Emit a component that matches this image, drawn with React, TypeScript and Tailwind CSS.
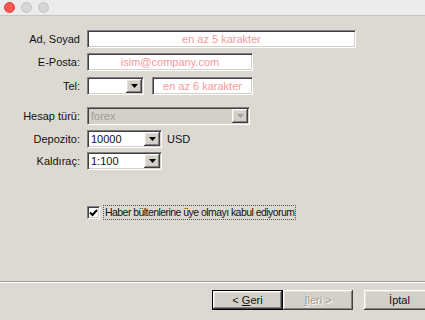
import React from "react";

const sunken =
    "border border-t-[#808080] border-l-[#808080] border-b-white border-r-white shadow-[inset_1px_1px_0_#404040,inset_-1px_-1px_0_#d4d0c8]";
const raised =
    "bg-[#d4d0c8] shadow-[inset_-1px_-1px_0_#404040,inset_1px_1px_0_#ffffff,inset_-2px_-2px_0_#808080,inset_2px_2px_0_#e4e2dc]";

function Arrow({ disabled }: { disabled?: boolean }) {
    return (
        <span className={`flex w-[16px] h-full items-center justify-center ${raised}`}>
            <svg width="7" height="4" viewBox="0 0 7 4">
                <path d="M0 0h7L3.5 4z" fill={disabled ? "#a0a0a0" : "#000"} />
            </svg>
        </span>
    );
}

function Combo({ value, className, disabled }: { value: string; className: string; disabled?: boolean }) {
    return (
        <div className={`flex h-[18px] ${className} ${sunken} ${disabled ? "bg-[#d4d0c8]" : "bg-white"} p-[1px]`}>
            <span className={`flex-1 pl-[2px] leading-[14px] ${disabled ? "text-[#a09d97]" : "text-[#111]"}`}>{value}</span>
            <Arrow disabled={disabled} />
        </div>
    );
}

function TextBox({ placeholder, className }: { placeholder: string; className: string }) {
    return (
        <div className={`flex h-[18px] ${className} ${sunken} bg-white items-center justify-center text-[#f59a9a]`}>
            {placeholder}
        </div>
    );
}

function Row({ label, className, children }: { label: string; className: string; children: React.ReactNode }) {
    return (
        <div className={`flex items-center gap-[7px] ${className}`}>
            <span className="w-[80px] text-right text-[#111]">{label}</span>
            {children}
        </div>
    );
}

export default function App() {
    return (
        <div
            className="flex h-[320px] w-[425px] flex-col bg-[#dcd9d3] text-[11px] overflow-hidden"
            style={{ fontFamily: '"Liberation Sans", Arial, sans-serif' }}
        >
            {/* Title bar */}
            <div className="flex h-[16px] items-center gap-[6px] border-b border-[#c4c4c4] bg-[#ececec] pl-[4px]">
                <span className="h-[11px] w-[11px] rounded-full bg-[#fc5753] border border-[#df3d39]" />
                <span className="h-[11px] w-[11px] rounded-full bg-[#d6d6d6] border border-[#c4c4c4]" />
                <span className="h-[11px] w-[11px] rounded-full bg-[#d6d6d6] border border-[#c4c4c4]" />
            </div>

            <div className="flex flex-col">
                <Row label="Ad, Soyad" className="mt-[14px]">
                    <TextBox placeholder="en az 5 karakter" className="w-[269px]" />
                </Row>
                <Row label="E-Posta:" className="mt-[5px]">
                    <TextBox placeholder="isim@company.com" className="w-[166px]" />
                </Row>
                <Row label="Tel:" className="mt-[6px]">
                    <Combo value="" className="w-[57px]" />
                    <TextBox placeholder="en az 6 karakter" className="ml-[1px] w-[101px]" />
                </Row>
                <Row label="Hesap türü:" className="mt-[12px]">
                    <Combo value="forex" className="w-[163px]" disabled />
                </Row>
                <Row label="Depozito:" className="mt-[5px]">
                    <Combo value="10000" className="w-[75px]" />
                    <span className="-ml-[2px] text-[#111]">USD</span>
                </Row>
                <Row label="Kaldıraç:" className="mt-[4px]">
                    <Combo value="1:100" className="w-[75px]" />
                </Row>

                <div className="mt-[35px] flex items-center gap-[3px] pl-[87px]">
                    <span className={`flex h-[13px] w-[13px] items-center justify-center bg-white ${sunken}`}>
                        <svg width="9" height="8" viewBox="0 0 9 8">
                            <path d="M1 3.5l2.5 2.5L8 1" stroke="#000" strokeWidth="2" fill="none" />
                        </svg>
                    </span>
                    <span className="border border-dotted border-[#555] px-[1px] text-[10.5px] leading-[13px] text-[#111] tracking-[-0.55px]">
                        Haber bültenlerine üye olmayı kabul ediyorum
                    </span>
                </div>
            </div>

            {/* Footer */}
            <div className="mt-auto flex justify-end gap-[11px] border-t border-t-[#a0a0a0] pt-[8px] pb-[10px] shadow-[inset_0_1px_0_#ffffff]">
                <div className="flex">
                    <button className={`h-[20px] w-[71px] border border-black text-[#111] ${raised}`}>
                        &lt; <span className="underline">G</span>eri
                    </button>
                    <button className={`h-[20px] w-[70px] text-[#a09d97] [text-shadow:1px_1px_0_#fff] ${raised}`}>
                        <span className="underline">İ</span>leri &gt;
                    </button>
                </div>
                <button className={`-mr-[10px] h-[20px] w-[71px] text-[#111] ${raised}`}>İptal</button>
            </div>
        </div>
    );
}
